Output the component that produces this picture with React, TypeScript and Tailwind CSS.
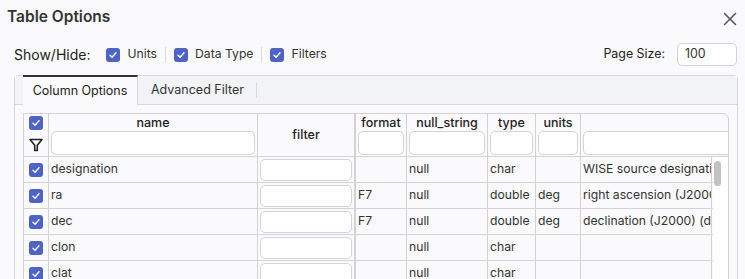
import React from 'react';

const font = { fontFamily: 'Inter, "Noto Sans", sans-serif' };

const Check = ({ className = '' }: { className?: string }) => (
  <span
    className={`inline-flex h-[14px] w-[14px] shrink-0 items-center justify-center rounded-[3px] bg-[#4d63c9] ${className}`}
  >
    <svg width="10" height="10" viewBox="0 0 10 10" fill="none">
      <path d="M2 5.2 4.1 7.2 8 2.8" stroke="white" strokeWidth="1.4" strokeLinecap="round" strokeLinejoin="round" />
    </svg>
  </span>
);

const Funnel = () => (
  <svg width="14" height="14" viewBox="0 0 14 14" fill="none">
    <path d="M1 1.5h12L8.3 7.2V12.5H5.7V7.2Z" stroke="#222" strokeWidth="1.6" strokeLinejoin="round" />
  </svg>
);

const rows = [
  { name: 'designation', format: '', nul: 'null', type: 'char', units: '', desc: 'WISE source designation' },
  { name: 'ra', format: 'F7', nul: 'null', type: 'double', units: 'deg', desc: 'right ascension (J2000)' },
  { name: 'dec', format: 'F7', nul: 'null', type: 'double', units: 'deg', desc: 'declination (J2000) (deg)' },
  { name: 'clon', format: '', nul: 'null', type: 'char', units: '', desc: '' },
  { name: 'clat', format: '', nul: 'null', type: 'char', units: '', desc: '' },
];

const HeadInput = ({ w }: { w: string }) => (
  <div className={`h-[24px] ${w} rounded-[5px] border border-[#cfd4de] bg-white`} />
);

export default function App() {
  return (
    <div style={font} className="relative h-[279px] w-[745px] overflow-hidden bg-[#fafafc] text-[#2b2b2b]">
      <div className="flex items-center justify-between pl-[7px] pr-[8px] pt-[6px]">
        <h1 className="text-[15.5px] font-semibold leading-[22px] text-[#333]">Table Options</h1>
        <svg width="14" height="14" viewBox="0 0 14 14" className="mt-[3px]">
          <path d="M1.5 1.5l11 11M12.5 1.5l-11 11" stroke="#555" strokeWidth="1.5" strokeLinecap="round" />
        </svg>
      </div>

      <div className="mt-[15px] flex h-[23px] items-center justify-between pl-[14px] pr-[8px]">
        <div className="flex items-center text-[12.2px]">
          <span className="mr-[16px] text-[14px] text-[#222]">Show/Hide:</span>
          <Check />
          <span className="ml-[7px] text-[#333]">Units</span>
          <span className="mx-[8px] h-[16px] w-px bg-[#dcdde2]" />
          <Check />
          <span className="ml-[7px] text-[#333]">Data Type</span>
          <span className="mx-[8px] h-[16px] w-px bg-[#dcdde2]" />
          <Check />
          <span className="ml-[7px] text-[#333]">Filters</span>
        </div>
        <div className="flex items-center text-[12.4px]">
          <span className="mr-[12px] text-[#222]">Page Size:</span>
          <div className="flex h-[23px] w-[60px] items-center rounded-[5px] border border-[#cfd4de] bg-white pl-[7px] text-[#333]">
            100
          </div>
        </div>
      </div>

      <div className="ml-[14px] mt-[9px] h-[220px] w-[724px] rounded-t-[4px] border border-[#d6d8de] bg-[#fafafc]">
        <div className="flex h-[29px] items-stretch border-b border-[#d6d8de] bg-[#f2f3f6] pl-[8px] text-[12.5px]">
          <div className="-mb-px -mt-px flex w-[115px] items-center justify-center border-r border-t-2 border-r-[#d6d8de] border-t-[#333] bg-[#fafafc] text-[#222]">
            Column Options
          </div>
          <div className="flex items-center pl-[13px] text-[#333]">Advanced Filter</div>
          <div className="ml-[12px] mt-[7px] h-[15px] w-px bg-[#d6d8de]" />
        </div>

        <div className="ml-[8px] mt-[8px] w-[706px] text-[12.2px]">
          <div className="flex h-[44px] rounded-tr-[6px] border border-[#d3d3d3] bg-[#fafafc] text-[12.5px]">
            <div className="flex w-[25px] flex-col items-center justify-start gap-[8px] border-r border-[#d3d3d3] pt-[2px]">
              <Check />
              <Funnel />
            </div>
            <div className="flex w-[209px] flex-col items-center border-r border-[#d3d3d3] px-[2px]">
              <span className="leading-[17px] font-medium text-[#222]">name</span>
              <HeadInput w="w-full" />
            </div>
            <div className="flex w-[98px] items-center justify-center border-r-2 border-[#d3d3d3] font-medium text-[#222]">
              filter
            </div>
            <div className="flex w-[51px] flex-col items-center border-r border-[#d3d3d3] px-[2px]">
              <span className="leading-[17px] font-medium text-[#222]">format</span>
              <HeadInput w="w-full" />
            </div>
            <div className="flex w-[81px] flex-col items-center border-r border-[#d3d3d3] px-[2px]">
              <span className="leading-[17px] font-medium text-[#222]">null_string</span>
              <HeadInput w="w-full" />
            </div>
            <div className="flex w-[48px] flex-col items-center border-r border-[#d3d3d3] px-[2px]">
              <span className="leading-[17px] font-medium text-[#222]">type</span>
              <HeadInput w="w-full" />
            </div>
            <div className="flex w-[45px] flex-col items-center border-r border-[#d3d3d3] px-[2px]">
              <span className="leading-[17px] font-medium text-[#222]">units</span>
              <HeadInput w="w-full" />
            </div>
            <div className="flex flex-1 flex-col overflow-hidden pl-[2px] pt-[17px]">
              <div className="h-[24px] w-[150px] shrink-0 rounded-[5px] border border-[#cfd4de] bg-white" />
            </div>
          </div>

          <div className="relative flex border-x border-[#d3d3d3]">
            <div className="w-[689px]">
              {rows.map((r) => (
                <div key={r.name} className="flex h-[26px] border-b border-[#d3d3d3] text-[#333]">
                  <div className="flex w-[25px] items-center justify-center border-r border-[#d3d3d3]">
                    <Check />
                  </div>
                  <div className="flex w-[209px] items-center border-r border-[#d3d3d3] pl-[2px]">{r.name}</div>
                  <div className="flex w-[98px] items-center border-r-2 border-[#d3d3d3] px-[2px]">
                    <div className="h-[22px] w-full rounded-[5px] border border-[#cfd4de] bg-white" />
                  </div>
                  <div className="flex w-[51px] items-center border-r border-[#d3d3d3] pl-[2px]">{r.format}</div>
                  <div className="flex w-[81px] items-center border-r border-[#d3d3d3] pl-[2px]">{r.nul}</div>
                  <div className="flex w-[48px] items-center border-r border-[#d3d3d3] pl-[2px]">{r.type}</div>
                  <div className="flex w-[45px] items-center border-r border-[#d3d3d3] pl-[2px]">{r.units}</div>
                  <div className="flex w-[131px] items-center overflow-hidden whitespace-nowrap border-r border-[#d3d3d3] pl-[2px]">
                    {r.desc}
                  </div>
                </div>
              ))}
            </div>
            <div className="flex-1 bg-white">
              <div className="ml-[1px] mt-[4px] h-[25px] w-[7px] rounded-full bg-[#c2c2c2]" />
            </div>
          </div>
        </div>
      </div>
    </div>
  );
}
